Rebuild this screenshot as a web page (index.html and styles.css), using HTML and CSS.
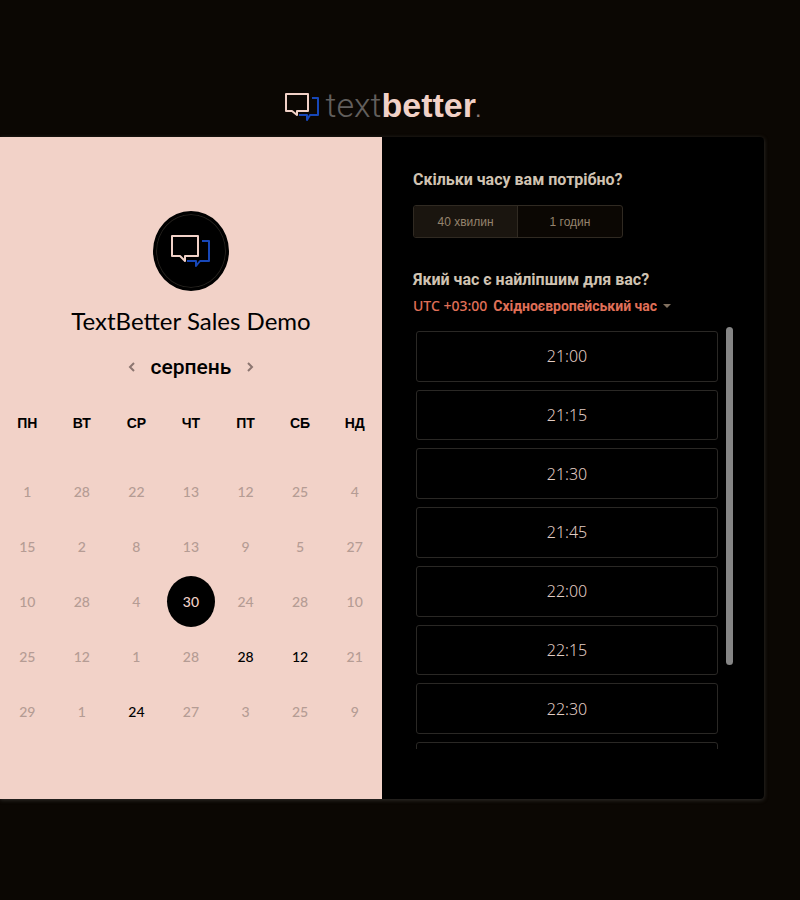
FILE: index.html
```html
<!DOCTYPE html>
<html lang="uk">
<head>
<meta charset="utf-8">
<meta name="viewport" content="width=device-width, initial-scale=1">
<title>TextBetter Sales Demo</title>
<link rel="stylesheet" href="styles.css">
</head>
<body>
<div class="page">
  <header class="brand">
    <svg class="brand-icon" viewBox="0 0 36 32" aria-hidden="true">
      <path class="bubble-back" d="M28 7h6v17h-8l-3 5v-5h-8"/>
      <path class="bubble-front" d="M2 3h22v17H13v4l-5-4H2z"/>
    </svg>
    <span class="brand-name"><span class="brand-text">text</span><span class="brand-better">better</span><span class="brand-dot">.</span></span>
  </header>
  <main class="card">
    <section class="calendar">
      <div class="avatar">
        <svg viewBox="0 0 42 36" aria-hidden="true">
          <path class="bubble-back" d="M32 8h7v20H30l-4 5v-5H17"/>
          <path class="bubble-front" d="M2 3h26v20H15v5l-5-5H2z"/>
        </svg>
      </div>
      <h1 class="title">TextBetter Sales Demo</h1>
      <div class="month">
        <button class="arrow" type="button" aria-label="Попередній місяць"><svg viewBox="0 0 8 12"><path d="M6 2 2 6l4 4"/></svg></button>
        <h2 class="month-name">серпень</h2>
        <button class="arrow" type="button" aria-label="Наступний місяць"><svg viewBox="0 0 8 12"><path d="m2 2 4 4-4 4"/></svg></button>
      </div>
      <table class="days">
        <thead><tr><th>ПН</th><th>ВТ</th><th>СР</th><th>ЧТ</th><th>ПТ</th><th>СБ</th><th>НД</th></tr></thead>
        <tbody>
          <tr><td>1</td><td>28</td><td>22</td><td>13</td><td>12</td><td>25</td><td>4</td></tr>
          <tr><td>15</td><td>2</td><td>8</td><td>13</td><td>9</td><td>5</td><td>27</td></tr>
          <tr><td>10</td><td>28</td><td>4</td><td><button class="day selected" type="button">30</button></td><td>24</td><td>28</td><td>10</td></tr>
          <tr><td>25</td><td>12</td><td>1</td><td>28</td><td><button class="day" type="button">28</button></td><td><button class="day" type="button">12</button></td><td>21</td></tr>
          <tr><td>29</td><td>1</td><td><button class="day" type="button">24</button></td><td>27</td><td>3</td><td>25</td><td>9</td></tr>
        </tbody>
      </table>
    </section>
    <section class="booking">
      <h2 class="question">Скільки часу вам потрібно?</h2>
      <div class="durations">
        <button class="duration active" type="button">40 хвилин</button>
        <button class="duration" type="button">1 годин</button>
      </div>
      <h2 class="question">Який час є найліпшим для вас?</h2>
      <div class="zone">
        <label class="zone-offset" for="zone">UTC +03:00</label>
        <select class="zone-select" id="zone"><option>Східноєвропейський час</option></select>
        <svg class="caret" viewBox="0 0 8 4" aria-hidden="true"><path d="M0 0h8L4 4z"/></svg>
      </div>
      <div class="times">
        <div class="slots">
          <button class="slot" type="button">21:00</button>
          <button class="slot" type="button">21:15</button>
          <button class="slot" type="button">21:30</button>
          <button class="slot" type="button">21:45</button>
          <button class="slot" type="button">22:00</button>
          <button class="slot" type="button">22:15</button>
          <button class="slot" type="button">22:30</button>
          <button class="slot" type="button" aria-label="22:45"></button>
        </div>
        <div class="scrollbar"><div class="thumb"></div></div>
      </div>
    </section>
  </main>
</div>
</body>
</html>
```
FILE: styles.css
```css
* { box-sizing: border-box; }

body {
  margin: 0;
  min-height: 100vh;
  background: #0b0703;
  font-family: "Liberation Sans", sans-serif;
  color: #000;
}

button, select { font: inherit; color: inherit; cursor: pointer; }
h1, h2 { margin: 0; }

.page { padding: 88px 36px 100px 0; }

.brand {
  display: flex;
  justify-content: center;
  align-items: center;
  gap: 6px;
  height: 37px;
  margin-bottom: 12px;
}

.brand-icon { width: 36px; height: 32px; }
.bubble-front, .bubble-back { fill: none; stroke-width: 2; stroke-linejoin: round; }
.bubble-front { stroke: #f1d1c7; }
.bubble-back { stroke: #1747b8; }

.brand-name { padding-top: 4px; font-size: 34px; line-height: 36px; white-space: nowrap; }
.brand-text { font-family: Roboto, sans-serif; font-weight: 300; color: #625f5d; }
.brand-better { font-weight: 700; color: #f1d1c7; }
.brand-dot { font-size: 16px; font-weight: 700; color: #8b7b75; }

.card {
  display: grid;
  grid-template-columns: 1fr 1fr;
  min-height: 662px;
  background: #000;
  border-radius: 0 4px 4px 0;
  box-shadow: 0 1px 4px #34322f;
}

.calendar {
  display: flex;
  flex-direction: column;
  align-items: center;
  padding-top: 74px;
  background: #f2d2c8;
}

.avatar {
  display: flex;
  align-items: center;
  justify-content: center;
  width: 76px;
  height: 80px;
  border: 3px solid #000;
  border-radius: 50%;
  background: #000;
  box-shadow: inset 0 0 0 1px #24211d;
}
.avatar svg { width: 42px; height: 36px; }

.title {
  margin-top: 14px;
  font: 400 24px/32px Lato, sans-serif;
}

.month {
  display: flex;
  align-items: center;
  gap: 11px;
  margin-top: 14px;
}
.month-name { font: 500 21px/32px Roboto, sans-serif; }
.arrow { display: flex; padding: 4px; border: 0; background: none; }
.arrow svg { width: 8px; height: 12px; fill: none; stroke: #8c7570; stroke-width: 2; }

.days {
  width: 100%;
  margin-top: 15px;
  border-collapse: collapse;
  table-layout: fixed;
}
.days th { height: 50px; padding: 0; font-size: 14px; }
.days thead::after { content: ""; display: block; height: 16px; }
.days td {
  height: 55px;
  padding: 0;
  text-align: center;
  font: 500 14px/20px Lato, sans-serif;
  color: #b59c94;
}
.day { padding: 0; border: 0; background: none; color: #000; }
.day.selected {
  width: 48px;
  height: 51px;
  border-radius: 50%;
  background: #000;
  color: #f1d1c7;
}

.booking { padding: 32px 31px 0; color: #d0c3b2; }
.question { font: 700 16px/22px Roboto, sans-serif; white-space: nowrap; }

.durations {
  display: grid;
  grid-template-columns: 1fr 1fr;
  width: 70%;
  max-width: 210px;
  height: 33px;
  margin: 14px 0 31px;
  border: 1px solid #302a22;
  border-radius: 3px;
  background: #0b0703;
  overflow: hidden;
}
.duration { padding: 0; border: 0; background: none; font-size: 12px; color: #95836d; }
.duration.active { background: #1a150f; border-right: 1px solid #302a22; }

.zone {
  display: flex;
  align-items: center;
  gap: 6px;
  margin-top: 4px;
  height: 22px;
  color: #e07058;
  white-space: nowrap;
}
.zone-offset { font: 500 14px/20px "Noto Sans", sans-serif; }
.zone-select {
  appearance: none;
  padding: 0;
  border: 0;
  background: none;
  font: 700 14px/20px Roboto, sans-serif;
}
.caret { width: 8px; height: 4px; fill: #80705f; }

.times {
  display: flex;
  gap: 8px;
  height: 422px;
  margin-top: 10px;
}
.slots {
  display: grid;
  flex: 1;
  grid-template-rows: repeat(7, 1fr) 7px;
  gap: 8px;
  padding: 4px 0 0 3px;
  overflow: hidden;
}
.slot {
  padding: 0;
  border: 1px solid #2a2825;
  border-radius: 3px;
  background: none;
  font: 300 16px/20px "Noto Sans", sans-serif;
  color: #e2cdc4;
}
.slot:last-child { height: 51px; }
.scrollbar { width: 7px; }
.thumb { height: 80%; border-radius: 4px; background: #858585; }
```
